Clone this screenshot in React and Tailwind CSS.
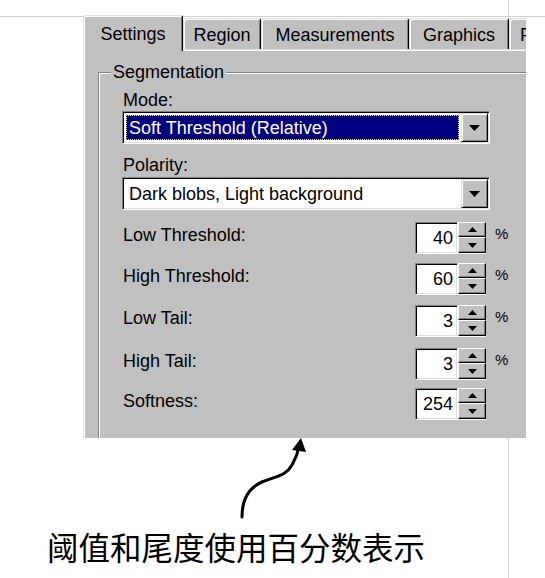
import React from "react";

const FONT = "font-['Liberation_Sans',Arial,sans-serif]";

function Tab({ label, width, selected, align = "center" }) {
  if (selected) {
    return (
      <div
        className={`relative z-10 -mb-[2px] h-[36px] ${width} shrink-0 rounded-tl-[3px] rounded-tr-[2px] border-l border-t border-r border-l-[#dfdfdf] border-t-[#dfdfdf] border-r-black bg-[#c0c0c0] pt-[7px] text-center shadow-[inset_1px_1px_0_#ffffff,inset_-1px_0_0_#808080]`}
      >
        <span className="text-[18px] leading-[20px] text-black">{label}</span>
      </div>
    );
  }
  return (
    <div
      className={`h-[31px] ${width} shrink-0 overflow-hidden whitespace-nowrap rounded-tl-[3px] rounded-tr-[2px] border-l border-t border-r border-l-[#dfdfdf] border-t-[#dfdfdf] border-r-black bg-[#c0c0c0] pt-[5px] shadow-[inset_1px_1px_0_#ffffff,inset_-1px_0_0_#808080] ${
        align === "left" ? "pl-[10px] text-left" : "text-center"
      }`}
    >
      <span className="text-[18px] leading-[20px] text-black">{label}</span>
    </div>
  );
}

function DownArrow() {
  return (
    <svg width="11" height="6" viewBox="0 0 11 6">
      <polygon points="0,0 11,0 5.5,6" fill="#000" />
    </svg>
  );
}

function ComboButton() {
  return (
    <div className="flex h-full w-[27px] shrink-0 items-center justify-center border border-l-[#dfdfdf] border-t-[#dfdfdf] border-r-black border-b-black bg-[#c0c0c0] shadow-[inset_1px_1px_0_#ffffff,inset_-1px_-1px_0_#808080]">
      <DownArrow />
    </div>
  );
}

function Combo({ text, highlighted }) {
  return (
    <div className="flex h-[33px] w-[368px] border border-l-[#808080] border-t-[#808080] border-r-white border-b-white bg-white p-[1px] shadow-[inset_1px_1px_0_#000000,inset_-1px_-1px_0_#dfdfdf]">
      <div className="flex min-w-0 flex-1 items-stretch p-[2px]">
        {highlighted ? (
          <div className="flex flex-1 items-center border border-dotted border-[#e8e070] bg-[#000080] pl-[2px]">
            <span className="whitespace-nowrap text-[18px] leading-[20px] text-white">{text}</span>
          </div>
        ) : (
          <div className="flex flex-1 items-center pl-[3px]">
            <span className="whitespace-nowrap text-[18px] leading-[20px] text-black">{text}</span>
          </div>
        )}
      </div>
      <ComboButton />
    </div>
  );
}

function SpinBtn({ up, h }) {
  return (
    <div
      className={`flex ${h} w-full items-center justify-center border border-l-white border-t-white border-r-black border-b-black bg-[#c0c0c0] shadow-[inset_-1px_-1px_0_#808080]`}
    >
      <svg width="9" height="5" viewBox="0 0 9 5">
        {up ? (
          <polygon points="0,5 9,5 4.5,0" fill="#000" />
        ) : (
          <polygon points="0,0 9,0 4.5,5" fill="#000" />
        )}
      </svg>
    </div>
  );
}

function SpinRow({ label, value, percent, mt }) {
  return (
    <div className={`flex h-[32px] items-start ${mt}`}>
      <div className="mt-[3px] w-[293px] shrink-0 pl-[1px] text-[18px] leading-[20px] text-black">{label}</div>
      <div className="flex h-[32px] w-[43px] items-center justify-end border border-l-[#808080] border-t-[#808080] border-r-white border-b-white bg-white pr-[4px] shadow-[inset_1px_1px_0_#000000,inset_-1px_-1px_0_#dfdfdf]">
        <span className="text-[18px] leading-[20px] text-black">{value}</span>
      </div>
      <div className="flex h-[32px] w-[28px] flex-col border-b border-b-white">
        <SpinBtn up h="h-[15px]" />
        <SpinBtn h="h-[16px]" />
      </div>
      {percent && (
        <div className="ml-[9px] mt-[3px] text-[15px] leading-[18px] text-black">%</div>
      )}
    </div>
  );
}

export default function App() {
  return (
    <div className={`h-[578px] w-[545px] overflow-hidden bg-white ${FONT}`}>
      {/* top strip of the page table */}
      <div className="flex h-[16px]">
        <div className="w-[509px] border-r border-r-[#d0d0d0]" />
      </div>
      <div className="h-px w-full bg-[#d0d0d0]" />

      <div className="flex h-[561px] w-[509px] flex-col border-r border-r-[#d0d0d0]">
        {/* screenshot of the dialog */}
        <div className="relative -mt-[2px] ml-[83px] flex h-[423px] w-[443px] shrink-0 flex-col overflow-hidden">
          <div className="flex h-[34px] shrink-0 items-end">
            <Tab label="Settings" width="w-[100px]" selected />
            <Tab label="Region" width="w-[78px]" />
            <Tab label="Measurements" width="w-[148px]" />
            <Tab label="Graphics" width="w-[100px]" />
            <Tab label="F" width="w-[40px]" align="left" />
          </div>
          <div className="flex-1 border-l border-t border-l-[#dfdfdf] border-t-[#dfdfdf] bg-[#c0c0c0] shadow-[inset_1px_1px_0_#ffffff]">
            <fieldset className="ml-[14px] mt-[12px] h-[400px] w-[440px] border-l border-t border-l-[#808080] border-t-[#808080] shadow-[inset_1px_1px_0_#ffffff]">
              <legend className="ml-[12px] bg-[#c0c0c0] px-[2px] text-[18px] leading-[20px] text-black">
                Segmentation
              </legend>
              <div className="pl-[23px] pt-[8px]">
                <div className="pl-[1px] text-[18px] leading-[20px] text-black">Mode:</div>
                <div className="mt-[1px]">
                  <Combo text="Soft Threshold (Relative)" highlighted />
                </div>
                <div className="mt-[11px] pl-[1px] text-[18px] leading-[20px] text-black">Polarity:</div>
                <div className="mt-[2px]">
                  <Combo text="Dark blobs, Light background" />
                </div>
                <SpinRow label="Low Threshold:" value="40" percent mt="mt-[12px]" />
                <SpinRow label="High Threshold:" value="60" percent mt="mt-[9px]" />
                <SpinRow label="Low Tail:" value="3" percent mt="mt-[10px]" />
                <SpinRow label="High Tail:" value="3" percent mt="mt-[11px]" />
                <SpinRow label="Softness:" value="254" mt="mt-[8px]" />
              </div>
            </fieldset>
          </div>
        </div>

        {/* annotation arrow */}
        <svg width="509" height="82" viewBox="0 438 509 82" className="block shrink-0">
          <path
            d="M242 517 C242 500 248 488 262 482 C276 476 286 476 292 465 C296 458 298 452 299 447"
            fill="none"
            stroke="#000"
            strokeWidth="3"
            strokeLinecap="round"
          />
          <polygon points="301,438 292,450 306,452" fill="#000" />
        </svg>

        <div className="mt-[6px] pl-[47px] font-['Noto_Sans_CJK_SC',sans-serif] text-[31.5px] leading-[40px] text-black">
          阈值和尾度使用百分数表示
        </div>
      </div>
    </div>
  );
}
